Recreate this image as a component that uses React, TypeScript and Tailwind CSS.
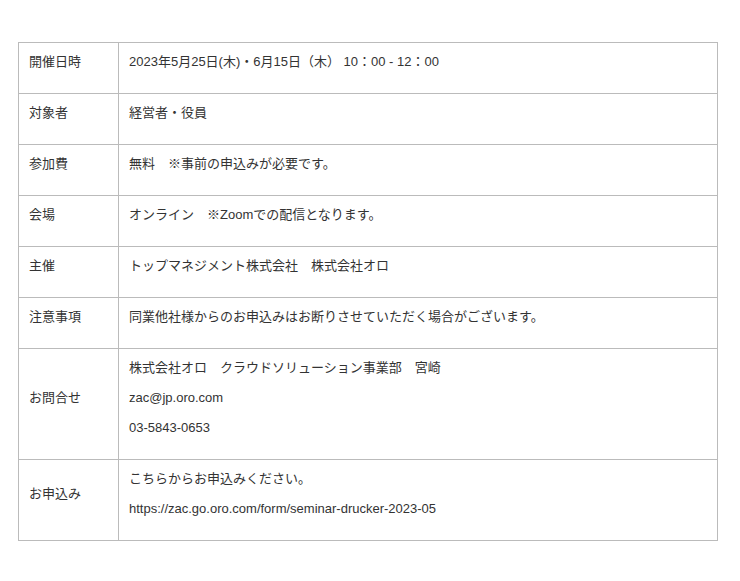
import React from 'react';

type Row = { label: string; lines: string[] };

const rows: Row[] = [
  { label: '開催日時', lines: ['2023年5月25日(木)・6月15日（木） 10：00 - 12：00'] },
  { label: '対象者', lines: ['経営者・役員'] },
  { label: '参加費', lines: ['無料　※事前の申込みが必要です。'] },
  { label: '会場', lines: ['オンライン　※Zoomでの配信となります。'] },
  { label: '主催', lines: ['トップマネジメント株式会社　株式会社オロ'] },
  { label: '注意事項', lines: ['同業他社様からのお申込みはお断りさせていただく場合がございます。'] },
  {
    label: 'お問合せ',
    lines: ['株式会社オロ　クラウドソリューション事業部　宮崎', 'zac@jp.oro.com', '03-5843-0653'],
  },
  {
    label: 'お申込み',
    lines: ['こちらからお申込みください。', 'https://zac.go.oro.com/form/seminar-drucker-2023-05'],
  },
];

export default function App() {
  return (
    <div
      className="min-h-screen bg-white pt-[42px] pl-[18px] text-[13px] leading-5 text-[#333]"
      style={{ fontFamily: '"Liberation Sans", "Noto Sans CJK JP", sans-serif' }}
    >
      <table className="w-[700px] border-collapse">
        <tbody>
          {rows.map((row) => (
            <tr key={row.label}>
              <td className="w-[100px] border border-[#bbb] px-[10px] pt-[9px] pb-[11px] align-middle">
                <p className="mb-[10px]">{row.label}</p>
              </td>
              <td className="border border-[#bbb] px-[10px] pt-[9px] pb-[11px] align-top">
                {row.lines.map((line) => (
                  <p key={line} className="mb-[10px]">
                    {line}
                  </p>
                ))}
              </td>
            </tr>
          ))}
        </tbody>
      </table>
    </div>
  );
}
